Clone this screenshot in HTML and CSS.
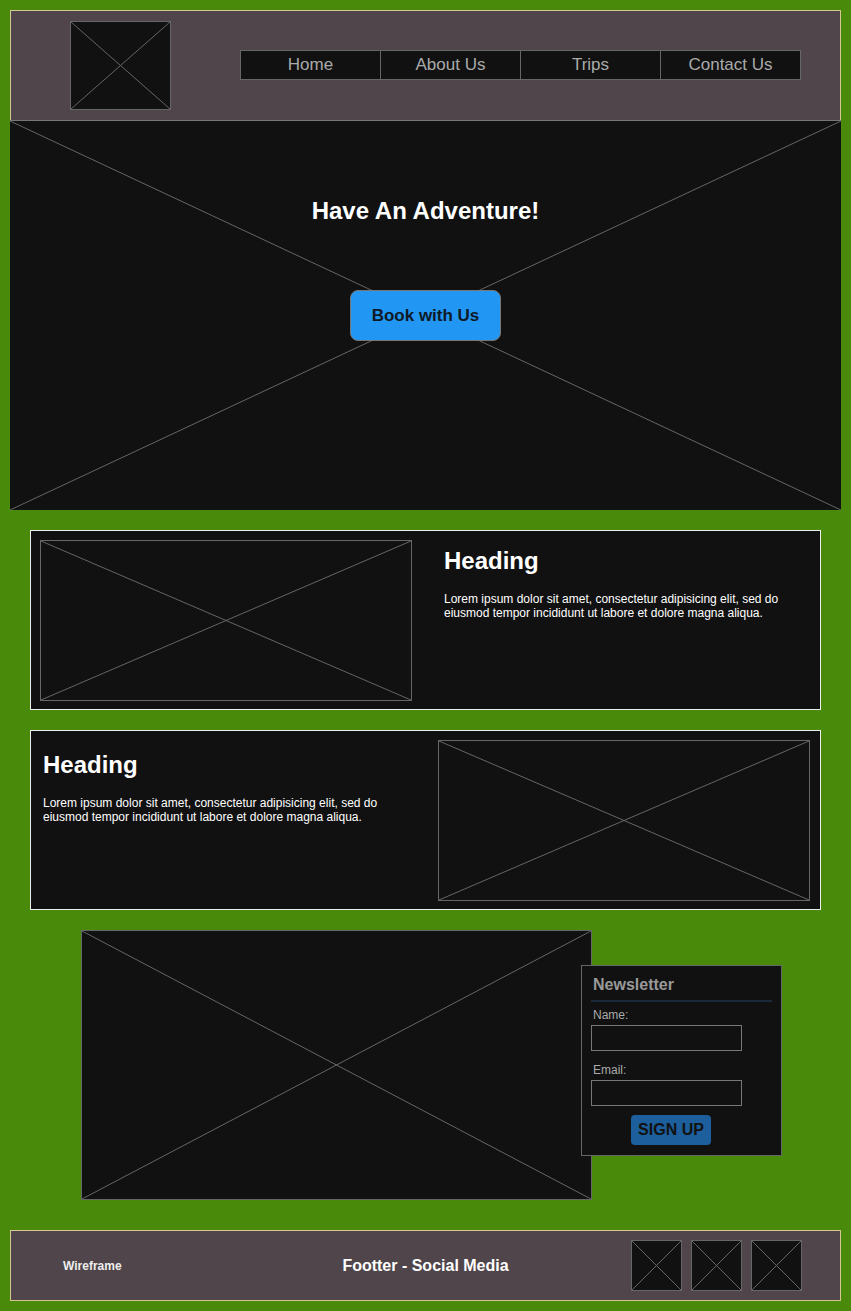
FILE: index.html
```html
<!DOCTYPE html>
<html lang="en">
<head>
<meta charset="UTF-8">
<meta name="viewport" content="width=device-width, initial-scale=1.0">
<title>Wireframe</title>
<link rel="stylesheet" href="styles.css">
</head>
<body>
<header class="header">
  <svg class="ph logo" viewBox="0 0 100 100" preserveAspectRatio="none"><line x1="0" y1="0" x2="100" y2="100"/><line x1="100" y1="0" x2="0" y2="100"/></svg>
  <nav class="nav">
    <a href="#">Home</a>
    <a href="#">About Us</a>
    <a href="#">Trips</a>
    <a href="#">Contact Us</a>
  </nav>
</header>

<section class="hero">
  <svg class="hero-bg" viewBox="0 0 100 100" preserveAspectRatio="none"><line x1="0" y1="0" x2="100" y2="100"/><line x1="100" y1="0" x2="0" y2="100"/></svg>
  <h1>Have An Adventure!</h1>
  <button class="book">Book with Us</button>
</section>

<!-- kartu konten -->
<section class="card">
  <svg class="ph card-img" viewBox="0 0 100 100" preserveAspectRatio="none"><line x1="0" y1="0" x2="100" y2="100"/><line x1="100" y1="0" x2="0" y2="100"/></svg>
  <div class="card-text right">
    <h2>Heading</h2>
    <p>Lorem ipsum dolor sit amet, consectetur adipisicing elit, sed do eiusmod tempor incididunt ut labore et dolore magna aliqua.</p>
  </div>
</section>

<section class="card">
  <div class="card-text left">
    <h2>Heading</h2>
    <p>Lorem ipsum dolor sit amet, consectetur adipisicing elit, sed do eiusmod tempor incididunt ut labore et dolore magna aliqua.</p>
  </div>
  <svg class="ph card-img" viewBox="0 0 100 100" preserveAspectRatio="none"><line x1="0" y1="0" x2="100" y2="100"/><line x1="100" y1="0" x2="0" y2="100"/></svg>
</section>

<section class="bottom">
  <svg class="ph big-img" viewBox="0 0 100 100" preserveAspectRatio="none"><line x1="0" y1="0" x2="100" y2="100"/><line x1="100" y1="0" x2="0" y2="100"/></svg>
  <form class="newsletter">
    <h3>Newsletter</h3>
    <label for="name">Name:</label>
    <input type="text" id="name">
    <label for="email">Email:</label>
    <input type="text" id="email">
    <button type="button" class="signup">SIGN UP</button>
  </form>
</section>

<footer class="footer">
  <span class="wf">Wireframe</span>
  <span class="footer-title">Footter - Social Media</span>
  <div class="social">
    <svg class="ph icon" viewBox="0 0 100 100" preserveAspectRatio="none"><line x1="0" y1="0" x2="100" y2="100"/><line x1="100" y1="0" x2="0" y2="100"/></svg>
    <svg class="ph icon" viewBox="0 0 100 100" preserveAspectRatio="none"><line x1="0" y1="0" x2="100" y2="100"/><line x1="100" y1="0" x2="0" y2="100"/></svg>
    <svg class="ph icon" viewBox="0 0 100 100" preserveAspectRatio="none"><line x1="0" y1="0" x2="100" y2="100"/><line x1="100" y1="0" x2="0" y2="100"/></svg>
  </div>
</footer>
</body>
</html>
```

FILE: styles.css
```css
/* layout wireframe */
* {
  box-sizing: border-box;
}
body {
  margin: 0;
  padding: 10px;
  background: #4a8a0a;
  font-family: "Liberation Sans", Arial, sans-serif;
  color: #fff;
}

/* placeholder gambar */
.ph {
  display: block;
  background: #111;
  border: 1px solid #666;
}
.ph line,
.hero-bg line {
  stroke: #666;
  stroke-width: 1;
  vector-effect: non-scaling-stroke;
}

.header {
  display: flex;
  align-items: flex-start;
  height: 110px;
  padding: 10px 0 0 59px;
  background: #4f454a;
  border: 1px solid #d6c690;
  border-bottom: none;
}
.logo {
  width: 101px;
  height: 89px;
}
.nav {
  display: flex;
  margin: 29px 0 0 69px;
  border: 1px solid #666;
  background: #111;
}
.nav a {
  width: 140px;
  height: 28px;
  line-height: 28px;
  text-align: center;
  color: #aaa;
  font-size: 17px;
  text-decoration: none;
  border-left: 1px solid #666;
}
.nav a:first-child {
  border-left: none;
  width: 139px;
}

.hero {
  position: relative;
  height: 390px;
  background: #111;
  border-top: 1px solid #777;
  text-align: center;
  padding-top: 76px;
}
.hero-bg {
  position: absolute;
  top: 0;
  left: 0;
  width: 100%;
  height: 100%;
}
.hero h1 {
  position: relative;
  margin: 0;
  font-size: 24px;
  line-height: 28px;
}
.book {
  position: relative;
  margin-top: 65px;
  width: 151px;
  height: 51px;
  background: #2196f3;
  border: 1px solid #777;
  border-radius: 8px;
  color: #0f1a26;
  font-family: inherit;
  font-size: 17px;
  font-weight: bold;
}

.card {
  display: flex;
  align-items: flex-start;
  height: 180px;
  margin: 20px 20px 0;
  padding: 9px;
  background: #111;
  border: 1px solid #eee;
}
.card-img {
  width: 372px;
  height: 161px;
}
.card-text {
  width: 365px;
}
.card-text.right {
  margin-left: 32px;
}
.card-text.left {
  margin: 0 30px 0 3px;
  padding-top: 4px;
}
.card h2 {
  margin: 7px 0 0;
  font-size: 24px;
  line-height: 28px;
}
.card p {
  margin: 17px 0 0;
  font-size: 12px;
  line-height: 14px;
}

.bottom {
  display: flex;
  align-items: flex-start;
  margin-top: 20px;
  padding-left: 71px;
}
.big-img {
  width: 511px;
  height: 270px;
}
.newsletter {
  display: flex;
  flex-direction: column;
  align-items: flex-start;
  width: 201px;
  height: 191px;
  margin: 35px 0 0 -11px;
  padding: 0 9px;
  background: #111;
  border: 1px solid #666;
  position: relative;
}
.newsletter h3 {
  align-self: stretch;
  margin: 9px 0 0;
  padding: 0 0 5px 2px;
  color: #999;
  font-size: 16px;
  line-height: 20px;
  border-bottom: 2px solid #1b2a3a;
}
.newsletter label {
  margin: 6px 0 3px 2px;
  color: #aaa;
  font-size: 12px;
  line-height: 14px;
}
.newsletter input {
  width: 151px;
  height: 26px;
  background: #111;
  border: 1px solid #777;
  margin-bottom: 6px;
}
.signup {
  align-self: flex-start;
  margin: 3px 0 0 40px;
  width: 80px;
  height: 30px;
  background: #1c5f9c;
  border: none;
  border-radius: 4px;
  color: #111;
  font-family: inherit;
  font-size: 16px;
  font-weight: bold;
}

.footer {
  display: grid;
  grid-template-columns: 1fr auto 1fr;
  align-items: center;
  height: 71px;
  margin-top: 30px;
  background: #4f454a;
  border: 1px solid #d6c690;
}
.wf {
  padding-left: 52px;
  font-size: 12px;
  font-weight: bold;
  color: #eee;
}
.footer-title {
  font-size: 16px;
  font-weight: bold;
}
.social {
  display: flex;
  justify-content: flex-end;
  gap: 9px;
  padding-right: 38px;
}
.icon {
  width: 51px;
  height: 51px;
}
```
